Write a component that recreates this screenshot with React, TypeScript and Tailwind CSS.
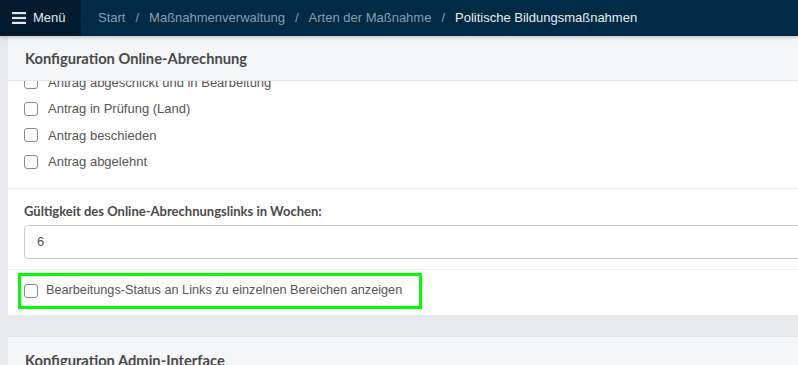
import React from "react";

function Box() {
  return <span className="inline-block w-[14px] h-[14px] border border-[#8a8a8a] rounded-[3px] bg-white shrink-0" />;
}

function Row({ label }: { label: string }) {
  return (
    <div className="h-[26.5px] flex items-center gap-[10px] px-4">
      <Box />
      <span>{label}</span>
    </div>
  );
}

export default function App() {
  return (
    <div className="w-[798px] h-[365px] overflow-hidden bg-[#e9eaee] text-[13px] text-[#555] font-['Liberation_Sans',sans-serif]">
      <nav className="h-[36px] flex bg-[#002a45] relative z-10 shadow-[0_1px_4px_rgba(0,0,0,0.25)]">
        <div className="w-[81px] bg-[#021b2e] flex items-center pl-[12px] gap-[7px] text-[#e6e9ec]">
          <svg width="14" height="12" viewBox="0 0 14 12">
            <rect x="0" y="0" width="14" height="2.2" fill="#e6e9ec" />
            <rect x="0" y="4.9" width="14" height="2.2" fill="#e6e9ec" />
            <rect x="0" y="9.8" width="14" height="2.2" fill="#e6e9ec" />
          </svg>
          <span>Menü</span>
        </div>
        <div className="flex items-center pl-[17px] gap-[10px] text-[#8b9db0]">
          <span>Start</span>
          <span>/</span>
          <span>Maßnahmenverwaltung</span>
          <span>/</span>
          <span>Arten der Maßnahme</span>
          <span>/</span>
          <span className="text-[#e8ecef]">Politische Bildungsmaßnahmen</span>
        </div>
      </nav>
      <div className="pl-2 -mr-6">
        <div className="bg-white">
          <div className="h-[45px] bg-[#f5f6f8] border-b border-[#e4e5e8] flex items-center px-[17px] relative z-[1]">
            <span className="text-[14.7px] font-bold text-[#4a4a4a] font-['Lato',sans-serif]">Konfiguration Online-Abrechnung</span>
          </div>
          <div className="overflow-hidden">
            <div className="-mt-[12px] pb-[12.5px] border-b border-[#ececec]">
              <Row label="Antrag abgeschickt und in Bearbeitung" />
              <Row label="Antrag in Prüfung (Land)" />
              <Row label="Antrag beschieden" />
              <Row label="Antrag abgelehnt" />
            </div>
          </div>
          <div className="px-4 pt-[11px] pb-[10px] border-b border-[#ececec]">
            <div className="font-bold text-[#4a4a4a] h-[20px] leading-[20px] mb-[4px] mt-[1px] font-['Lato',sans-serif] text-[13px]">
              Gültigkeit des Online-Abrechnungslinks in Wochen:
            </div>
            <div className="h-[34px] border border-[#cccccc] rounded-[4px] flex items-center px-3">6</div>
          </div>
          <div className="pt-[3px] pb-[6px] pl-[10px]">
            <div className="w-[404px] h-[36px] border-[3px] border-[#00ff00] flex items-center gap-[8px] pl-[3px]">
              <Box />
              <span className="text-[12.7px]">Bearbeitungs-Status an Links zu einzelnen Bereichen anzeigen</span>
            </div>
          </div>
        </div>
        <div className="mt-[21px] bg-[#f5f6f8] border-t border-[#e0e1e4] h-[60px] flex items-start px-[17px] pt-[12px]">
          <span className="text-[14.7px] font-bold text-[#4a4a4a] font-['Lato',sans-serif]">Konfiguration Admin-Interface</span>
        </div>
      </div>
    </div>
  );
}
